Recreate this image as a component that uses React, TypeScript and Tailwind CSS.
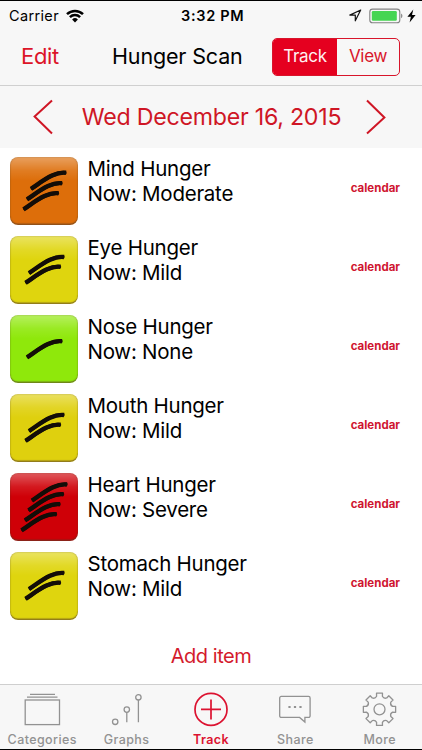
import type { ReactNode } from 'react';

type Level = 'None' | 'Mild' | 'Moderate' | 'Severe';

interface HungerItem {
  name: string;
  level: Level;
  tile: string;
}

const items: HungerItem[] = [
  { name: 'Mind Hunger', level: 'Moderate', tile: 'bg-[#dd6e0a]' },
  { name: 'Eye Hunger', level: 'Mild', tile: 'bg-[#dfd50e]' },
  { name: 'Nose Hunger', level: 'None', tile: 'bg-[#8fe80b]' },
  { name: 'Mouth Hunger', level: 'Mild', tile: 'bg-[#dfd00e]' },
  { name: 'Heart Hunger', level: 'Severe', tile: 'bg-[#cf0007]' },
  { name: 'Stomach Hunger', level: 'Mild', tile: 'bg-[#dfd50e]' },
];

// start point of every brush stroke, top one first
const strokes: Record<Level, [number, number][]> = {
  None: [[17.5, 42]],
  Mild: [[19.5, 36.7], [16, 46.5]],
  Moderate: [[21.5, 31.5], [17.5, 42], [14, 52]],
  Severe: [[22.5, 27.2], [19, 37], [15.5, 47], [12, 57]],
};

function LevelTile({ level, tile }: { level: Level; tile: string }) {
  return (
    <div
      className={`w-[68px] h-[68px] shrink-0 rounded-lg bg-linear-to-b from-white/35 via-white/10 via-20% to-transparent to-35% shadow-[inset_0_-1.5px_1px_rgba(90,60,40,0.55),inset_0_0_1.5px_rgba(90,70,30,0.6)] ${tile}`}
    >
      <svg viewBox="0 0 68 68" className="w-full h-full" fill="none" stroke="#130d08" strokeWidth="4.4">
        {strokes[level].map(([x, y]) => (
          <g key={y}>
            <path d={`M${x - 0.5} ${y + 0.4}c7 -4.6 13 -9.6 21 -13.3c5 -2.3 9 -3.4 14 -2.8`} />
            <path d={`M${x + 0.8} ${y - 0.4}c7 -4.6 12 -8.9 20 -12.6c5 -2.3 8 -3.3 12.6 -2.8`} strokeWidth="3.6" strokeLinecap="round" />
          </g>
        ))}
      </svg>
    </div>
  );
}

function StatusBar() {
  return (
    <div className="flex h-[29px] items-center pl-[9px] pr-[6px] text-black">
      <div className="flex w-[172px] items-center">
        <span className="w-[50px] whitespace-nowrap text-[14.5px] tracking-[0.35px]">Carrier</span>
        <svg className="ml-[7px] w-[18px] h-[14px]" viewBox="0 0 18 14" fill="none" stroke="#000" strokeWidth="2.5">
          <path d="M1 5.2a11.5 11.5 0 0 1 16 0" />
          <path d="M3.9 8.2a7.3 7.3 0 0 1 10.2 0" />
          <path d="M9 13.4L6.1 10.5a4.2 4.2 0 0 1 5.8 0z" fill="#000" stroke="none" />
        </svg>
      </div>
      <span className="whitespace-nowrap text-[14.5px] font-semibold tracking-[0.7px]">3:32 PM</span>
      <div className="ml-auto flex items-center">
        <svg className="w-[13px] h-[13px]" viewBox="0 0 13 13" fill="none" stroke="#111" strokeWidth="1.2" strokeLinejoin="round">
          <path d="M11.7 1L0.8 6.1h5.5v5.7z" />
        </svg>
        <svg className="ml-[7px] w-[34px] h-[16px]" viewBox="0 0 34 16">
          <rect x="0.8" y="1.1" width="30" height="13.6" rx="2.8" fill="none" stroke="#828282" strokeWidth="1.1" />
          <rect x="2.8" y="3" width="25" height="9.8" rx="1.2" fill="#45d552" />
          <path d="M32.2 5.6c1.6.7 1.6 3.9 0 4.6z" fill="#777" />
        </svg>
        <svg className="ml-[4px] w-[9px] h-[14px]" viewBox="0 0 9 14">
          <path d="M6.3 0.6L0.4 7.8h3.5L2.6 13.4 8.6 5.9H5z" fill="#000" />
        </svg>
      </div>
    </div>
  );
}

function NavBar() {
  return (
    <div className="flex h-[55px] items-center pb-[2px] pl-[21px] pr-[22px]">
      <button className="w-[91px] text-left text-[22px] tracking-[-0.3px] text-[#dc1428]">Edit</button>
      <h1 className="whitespace-nowrap text-[21.5px] tracking-[-0.15px]">Hunger Scan</h1>
      <div className="ml-auto flex w-[128px] h-[38px] overflow-hidden rounded-[5px] border border-[#d8152b] text-[17px] tracking-[-0.3px]">
        <button className="w-[64px] bg-[#e5001f] pt-px text-[#fff0f1]">Track</button>
        <button className="flex-1 pt-px text-[#d8152b]">View</button>
      </div>
    </div>
  );
}

function Chevron({ d }: { d: string }) {
  return (
    <svg className="w-[20px] h-[36px]" viewBox="0 0 20 36" fill="none" stroke="#cf1625" strokeWidth="2">
      <path d={d} />
    </svg>
  );
}

function DateBar() {
  return (
    <div className="flex h-[63px] items-center justify-between border-t border-[#d0d0d0] bg-[#f7f7f7] pl-[33px] pr-[36px] text-[#cf1625]">
      <Chevron d="M19 1.5L1.6 17.5L19 34.5" />
      <span className="ml-[4px] whitespace-nowrap text-[23.2px] tracking-[-0.25px]">Wed December 16, 2015</span>
      <Chevron d="M1 1.5L18.4 18.5L1 34.5" />
    </div>
  );
}

function HungerRow({ item }: { item: HungerItem }) {
  return (
    <li className="flex h-[79px] items-start pl-[10px] pr-[22px]">
      <LevelTile level={item.level} tile={item.tile} />
      <div className="-mt-[1px] ml-[9.5px] whitespace-nowrap text-[20.5px] leading-[25px] tracking-[-0.25px] text-black">
        <p>{item.name}</p>
        <p>Now: {item.level}</p>
      </div>
      <button className="ml-auto mt-[22px] text-[11.5px] leading-[18px] font-bold text-[#cf1530]">calendar</button>
    </li>
  );
}

// eight square teeth joined by shallow curved valleys
const gearPath = (() => {
  const at = (deg: number, r: number) => {
    const a = (deg * Math.PI) / 180;
    return `${(21.5 + r * Math.sin(a)).toFixed(2)} ${(18.3 - r * Math.cos(a)).toFixed(2)}`;
  };
  let d = `M${at(-10.5, 16.4)}`;
  for (let deg = 0; deg < 360; deg += 45) {
    d += `L${at(deg + 10.5, 16.4)}L${at(deg + 12.5, 13.4)}Q${at(deg + 22.5, 11.2)} ${at(deg + 32.5, 13.4)}L${at(deg + 34.5, 16.4)}`;
  }
  return `${d}Z`;
})();

const tabs: { label: string; active?: boolean; icon: ReactNode }[] = [
  {
    label: 'Categories',
    icon: (
      <>
        <rect x="5.2" y="9" width="34.3" height="24.6" />
        <path d="M7 6.2h30.5M10 3.4h25" />
      </>
    ),
  },
  {
    label: 'Graphs',
    icon: (
      <>
        <circle cx="10.2" cy="30.8" r="2.7" />
        <circle cx="21.8" cy="18.6" r="2.7" />
        <circle cx="33.4" cy="6.3" r="2.7" />
        <path d="M21.8 21.3v10M33.4 9v22.3" />
      </>
    ),
  },
  {
    label: 'Track',
    active: true,
    icon: (
      <>
        <circle cx="22" cy="18.4" r="16" />
        <path d="M12 18.4h20M22 8.4v20" />
      </>
    ),
  },
  {
    label: 'Share',
    icon: (
      <>
        <path d="M8.2 5.4h27.4a1.5 1.5 0 0 1 1.5 1.5v18a1.5 1.5 0 0 1-1.5 1.5h-3.7v4.6l-5.3-4.6H8.2a1.5 1.5 0 0 1-1.5-1.5v-18a1.5 1.5 0 0 1 1.5-1.5z" />
        <path d="M15.4 16h2.2M20.9 16h2.2M26.4 16h2.2" strokeWidth="2.2" />
      </>
    ),
  },
  {
    label: 'More',
    icon: (
      <>
        <path d={gearPath} strokeLinejoin="round" />
        <circle cx="21.5" cy="18.3" r="5.5" />
      </>
    ),
  },
];

function TabBar() {
  return (
    <nav className="grid h-[65px] grid-cols-5 border-t border-[#cfcfcf] bg-[#f7f7f7]">
      {tabs.map((tab) => (
        <button
          key={tab.label}
          className={`flex flex-col items-center pt-[6px] ${tab.active ? 'text-[#dc1230] font-semibold' : 'text-[#929292] font-medium'}`}
        >
          <svg className="w-[44px] h-[36px]" viewBox="0 0 44 36" fill="none" stroke="currentColor" strokeWidth={tab.active ? 1.7 : 1.3}>
            {tab.icon}
          </svg>
          <span className="mt-[5px] text-[12.5px] leading-[16px] tracking-[0.4px]">{tab.label}</span>
        </button>
      ))}
    </nav>
  );
}

export default function App() {
  return (
    <div className="flex w-[422px] h-[750px] flex-col overflow-hidden border-y border-black bg-white font-['Inter','Liberation_Sans',sans-serif]">
      <header className="bg-[#f7f7f7]">
        <StatusBar />
        <NavBar />
        <DateBar />
      </header>
      <main className="flex flex-1 flex-col pt-[9px]">
        <ul>
          {items.map((item) => (
            <HungerRow key={item.name} item={item} />
          ))}
        </ul>
        <button className="mx-auto mt-[12px] text-[20px] leading-[26px] tracking-[-0.45px] text-[#d41a2c]">Add item</button>
      </main>
      <TabBar />
    </div>
  );
}
